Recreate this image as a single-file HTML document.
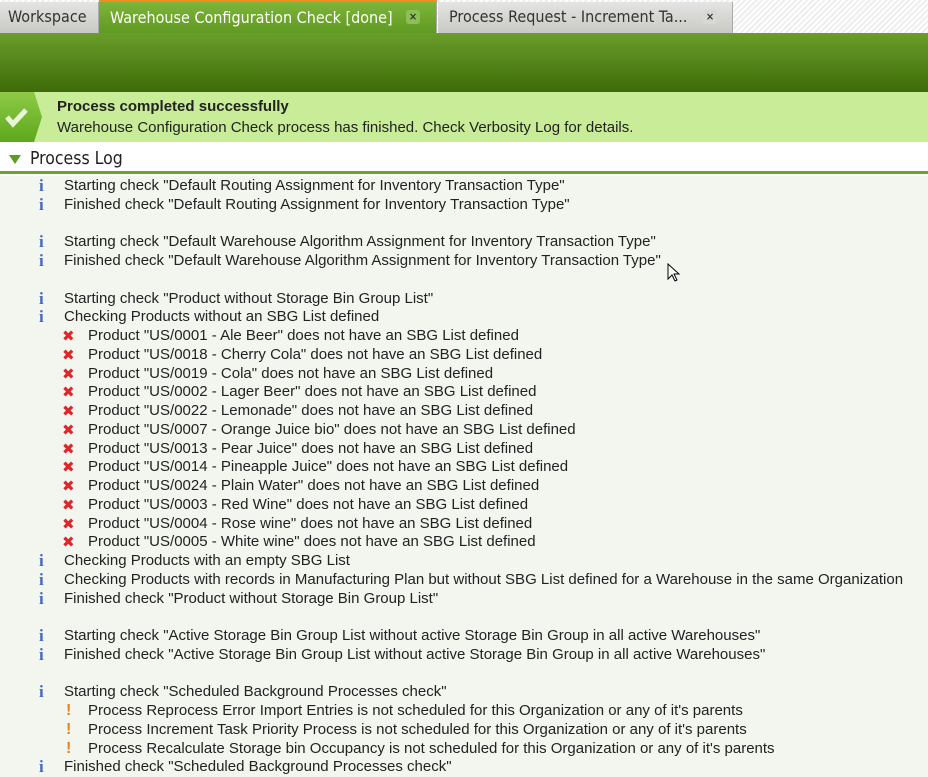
<!DOCTYPE html>
<html><head><meta charset="utf-8"><style>
*{margin:0;padding:0;box-sizing:border-box}
body{width:928px;height:776px;overflow:hidden;background:#f3f5ef;font-family:"Liberation Sans",Arial,sans-serif;position:relative}
.tabs{position:absolute;left:0;top:0;width:928px;height:33px;background:repeating-linear-gradient(135deg,#fff 0 2px,#eee 2px 4px)}
.tab{position:absolute;top:2px;height:31px;font-size:16px;line-height:30px;color:#333;background:linear-gradient(#e4e4e2,#c9c9c5);border-right:1px solid #aaa;padding-left:8px;font-family:"DejaVu Sans Condensed","Liberation Sans Narrow","Liberation Sans",sans-serif;white-space:nowrap}
.tab.a{background:linear-gradient(#7fb43a,#5f9a22);color:#fff;border-top:2px solid #f28c1f;top:0;height:33px;line-height:31px}
.x{position:absolute;top:8px;width:14px;height:14px;border-radius:3px;background:#d8d8d6;font-size:11px;line-height:14px;text-align:center;color:#333;font-weight:bold}
.tab.a .x{background:#8cbf55;color:#333}
.hdr{position:absolute;top:33px;left:0;width:928px;height:59px;background:linear-gradient(#6a9e2b,#3d6b07)}
.note{position:absolute;top:92px;left:0;width:928px;height:50px;background:#c8ec98}
.ico{position:absolute;left:0;top:0;width:42px;height:50px;background:linear-gradient(#8fca47,#5da81c);clip-path:polygon(0 0,34px 0,42px 25px,34px 50px,0 50px)}
.note b{position:absolute;left:57px;top:6px;font-size:15px;color:#222}
.note span{position:absolute;left:57px;top:27px;font-size:15px;color:#222}
.plh{position:absolute;top:142px;left:0;width:928px;height:29px;background:#fff;font-size:17.5px;color:#222;font-family:"DejaVu Sans Condensed","Liberation Sans",sans-serif}
.plh .t{position:absolute;left:30px;top:7px}
.tri{position:absolute;left:9px;top:13px;width:0;height:0;border-left:6px solid transparent;border-right:6px solid transparent;border-top:9px solid #5a9e1c}
.gl{position:absolute;top:171px;left:0;width:928px;height:3px;background:#6ba52e}
.gl2{position:absolute;top:174px;left:0;width:928px;height:2px;background:#fff}
.log{position:absolute;top:177px;left:0;width:928px;font-size:15px;line-height:18.75px;color:#222}
.l{height:18.75px;position:relative;white-space:nowrap}
.i{padding-left:64px}.i::before{content:"i";position:absolute;left:39px;top:0;color:#4468c4;font-weight:bold;font-family:"Liberation Serif",serif;font-size:17px}
.e{padding-left:88px}.e::before{content:"✖";position:absolute;left:62px;top:0;color:#e0262a;font-size:15px;font-family:"DejaVu Sans",sans-serif}
.w{padding-left:88px}.w::before{content:"!";position:absolute;left:66px;color:#e8821e;font-weight:bold;font-size:16px}
</style></head><body>
<div class="tabs">
<div class="tab" style="left:0;width:99px">Workspace</div>
<div class="tab a" style="left:99px;width:338px;padding-left:11px">Warehouse Configuration Check [done]<div class="x" style="left:307px">×</div></div>
<div class="tab" style="left:438px;width:295px;padding-left:11px">Process Request - Increment Ta...<div class="x" style="left:265px">×</div></div>
</div>
<div class="hdr"></div>
<div class="note"><div class="ico"><svg width="34" height="50" viewBox="0 0 34 50"><path d="M7 25l6 7 13-14" stroke="#e8f5d8" stroke-width="5" fill="none"/></svg></div><b>Process completed successfully</b><span>Warehouse Configuration Check process has finished. Check Verbosity Log for details.</span></div>
<div class="plh"><div class="tri"></div><div class="t">Process Log</div></div>
<div class="gl"></div><div class="gl2"></div>
<div class="log">
<div class="l i">Starting check "Default Routing Assignment for Inventory Transaction Type"</div>
<div class="l i">Finished check "Default Routing Assignment for Inventory Transaction Type"</div>
<div class="l"></div>
<div class="l i">Starting check "Default Warehouse Algorithm Assignment for Inventory Transaction Type"</div>
<div class="l i">Finished check "Default Warehouse Algorithm Assignment for Inventory Transaction Type"</div>
<div class="l"></div>
<div class="l i">Starting check "Product without Storage Bin Group List"</div>
<div class="l i">Checking Products without an SBG List defined</div>
<div class="l e">Product "US/0001 - Ale Beer" does not have an SBG List defined</div>
<div class="l e">Product "US/0018 - Cherry Cola" does not have an SBG List defined</div>
<div class="l e">Product "US/0019 - Cola" does not have an SBG List defined</div>
<div class="l e">Product "US/0002 - Lager Beer" does not have an SBG List defined</div>
<div class="l e">Product "US/0022 - Lemonade" does not have an SBG List defined</div>
<div class="l e">Product "US/0007 - Orange Juice bio" does not have an SBG List defined</div>
<div class="l e">Product "US/0013 - Pear Juice" does not have an SBG List defined</div>
<div class="l e">Product "US/0014 - Pineapple Juice" does not have an SBG List defined</div>
<div class="l e">Product "US/0024 - Plain Water" does not have an SBG List defined</div>
<div class="l e">Product "US/0003 - Red Wine" does not have an SBG List defined</div>
<div class="l e">Product "US/0004 - Rose wine" does not have an SBG List defined</div>
<div class="l e">Product "US/0005 - White wine" does not have an SBG List defined</div>
<div class="l i">Checking Products with an empty SBG List</div>
<div class="l i">Checking Products with records in Manufacturing Plan but without SBG List defined for a Warehouse in the same Organization</div>
<div class="l i">Finished check "Product without Storage Bin Group List"</div>
<div class="l"></div>
<div class="l i">Starting check "Active Storage Bin Group List without active Storage Bin Group in all active Warehouses"</div>
<div class="l i">Finished check "Active Storage Bin Group List without active Storage Bin Group in all active Warehouses"</div>
<div class="l"></div>
<div class="l i">Starting check "Scheduled Background Processes check"</div>
<div class="l w">Process Reprocess Error Import Entries is not scheduled for this Organization or any of it's parents</div>
<div class="l w">Process Increment Task Priority Process is not scheduled for this Organization or any of it's parents</div>
<div class="l w">Process Recalculate Storage bin Occupancy is not scheduled for this Organization or any of it's parents</div>
<div class="l i">Finished check "Scheduled Background Processes check"</div>
</div>
<svg style="position:absolute;left:667px;top:263px" width="14" height="20" viewBox="0 0 14 20"><path d="M1 1v15l4-4 3 6 2-1-3-6h5z" fill="#fff" stroke="#000" stroke-width="1"/></svg>
</body></html>
